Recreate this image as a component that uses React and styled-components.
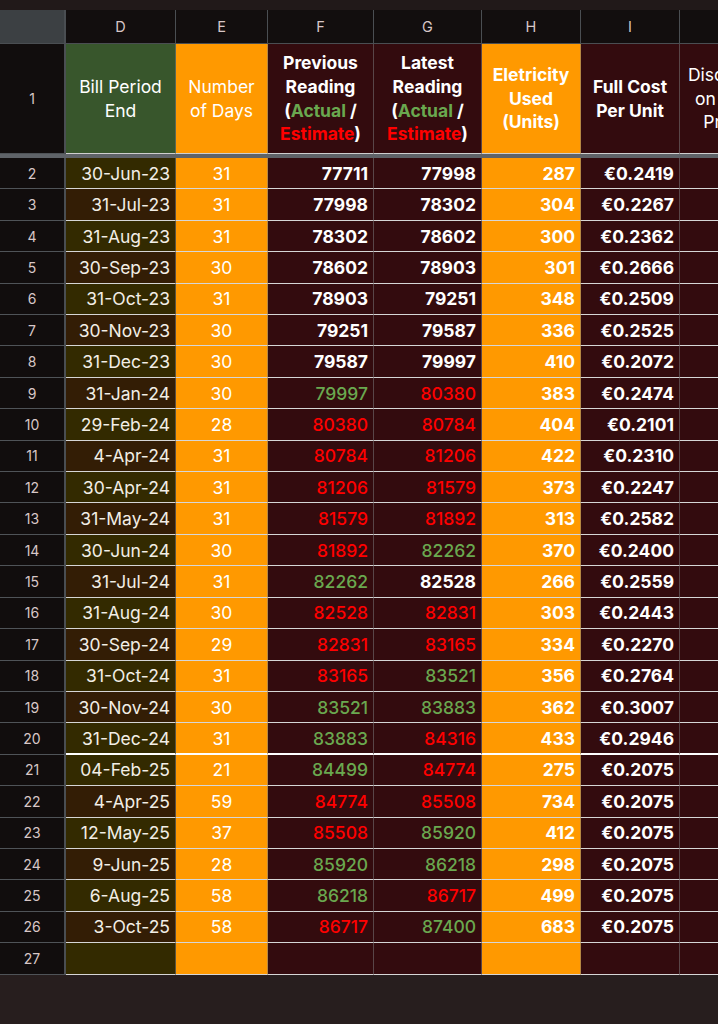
import React from "react";
import styled, { createGlobalStyle } from "styled-components";

const Global = createGlobalStyle`
  html, body { margin: 0; padding: 0; background: #271e1e; }
  body { font-family: Inter, Roboto, "Open Sans", Arial, sans-serif; }
  #root { width: 718px; height: 1024px; overflow: hidden; background: #271e1e; }
`;

const C = {
  olive: "#332a00",
  brown: "#331d05",
  maroon: "#330b0e",
  orange: "#ff9900",
  green: "#38562c",
  rownum: "#110d0d",
  red: "#ff0000",
  gtext: "#6aa84f",
};

const TopBand = styled.div`
  height: 10px;
  background: #211919;
`;

const Sheet = styled.div`
  display: grid;
  grid-template-columns: 66px 110px 92px 106px 108px 99px 99px 90px;
  grid-template-rows: 34px 110px 4px repeat(26, 31.42px);
  width: 770px;
`;

const Corner = styled.div`
  background: #3c4043;
  border-right: 2px solid #4a4e52;
  border-bottom: 1px solid #4a4e52;
  box-sizing: border-box;
`;

const ColLetter = styled.div`
  background: #120e0e;
  color: #d8c7c7;
  font-size: 14.5px;
  display: flex;
  align-items: center;
  justify-content: center;
  border-right: 1px solid #4a4e52;
  border-bottom: 1px solid #4a4e52;
  box-sizing: border-box;
`;

const RowNum = styled.div`
  background: ${C.rownum};
  color: #d8c7c7;
  font-size: 14px;
  display: flex;
  align-items: center;
  justify-content: center;
  border-right: 2px solid #4a4e52;
  border-bottom: 1px solid #4f5357;
  box-sizing: border-box;
`;

const HeadCell = styled.div`
  background: ${(p) => p.$bg};
  color: #ffffff;
  font-size: 17.5px;
  line-height: 23.6px;
  font-weight: ${(p) => (p.$bold ? 700 : 400)};
  text-align: center;
  display: flex;
  align-items: center;
  justify-content: center;
  padding: 0 2px;
  border-right: 1px solid rgba(120, 120, 120, 0.55);
  border-bottom: 1px solid #cfcfcf;
  box-sizing: border-box;
  white-space: nowrap;
`;

const Divider = styled.div`
  grid-column: 1 / -1;
  background: #5f6368;
`;

const Cell = styled.div`
  background: ${(p) => p.$bg};
  color: ${(p) => p.$color || "#ffffff"};
  font-size: 17.5px;
  font-weight: ${(p) => p.$weight || 400};
  display: flex;
  align-items: center;
  justify-content: ${(p) => (p.$center ? "center" : "flex-end")};
  padding: 0 5px;
  border-right: 1px solid rgba(120, 120, 120, 0.55);
  border-bottom: ${(p) => (p.$strong ? "2px solid #ffffff" : "1px solid #d6d6d6")};
  box-sizing: border-box;
  white-space: nowrap;
`;

const Act = styled.span`
  color: ${C.gtext};
`;
const Est = styled.span`
  color: ${C.red};
`;

const W = "w", G = "g", R = "r";
const rows = [
  ["30-Jun-23", 31, 77711, W, 77998, W, 287, "0.2419"],
  ["31-Jul-23", 31, 77998, W, 78302, W, 304, "0.2267"],
  ["31-Aug-23", 31, 78302, W, 78602, W, 300, "0.2362"],
  ["30-Sep-23", 30, 78602, W, 78903, W, 301, "0.2666"],
  ["31-Oct-23", 31, 78903, W, 79251, W, 348, "0.2509"],
  ["30-Nov-23", 30, 79251, W, 79587, W, 336, "0.2525"],
  ["31-Dec-23", 30, 79587, W, 79997, W, 410, "0.2072"],
  ["31-Jan-24", 30, 79997, G, 80380, R, 383, "0.2474"],
  ["29-Feb-24", 28, 80380, R, 80784, R, 404, "0.2101"],
  ["4-Apr-24", 31, 80784, R, 81206, R, 422, "0.2310"],
  ["30-Apr-24", 31, 81206, R, 81579, R, 373, "0.2247"],
  ["31-May-24", 31, 81579, R, 81892, R, 313, "0.2582"],
  ["30-Jun-24", 30, 81892, R, 82262, G, 370, "0.2400"],
  ["31-Jul-24", 31, 82262, G, 82528, W, 266, "0.2559"],
  ["31-Aug-24", 30, 82528, R, 82831, R, 303, "0.2443"],
  ["30-Sep-24", 29, 82831, R, 83165, R, 334, "0.2270"],
  ["31-Oct-24", 31, 83165, R, 83521, G, 356, "0.2764"],
  ["30-Nov-24", 30, 83521, G, 83883, G, 362, "0.3007"],
  ["31-Dec-24", 31, 83883, G, 84316, R, 433, "0.2946"],
  ["04-Feb-25", 21, 84499, G, 84774, R, 275, "0.2075"],
  ["4-Apr-25", 59, 84774, R, 85508, R, 734, "0.2075"],
  ["12-May-25", 37, 85508, R, 85920, G, 412, "0.2075"],
  ["9-Jun-25", 28, 85920, G, 86218, G, 298, "0.2075"],
  ["6-Aug-25", 58, 86218, G, 86717, R, 499, "0.2075"],
  ["3-Oct-25", 58, 86717, R, 87400, G, 683, "0.2075"],
  null,
];

const readingColor = (k) => (k === G ? C.gtext : k === R ? C.red : "#ffffff");

function Reading({ value, kind, strong }) {
  return (
    <Cell
      $bg={C.maroon}
      $color={readingColor(kind)}
      $weight={kind === W ? 700 : 500}
      $strong={strong}
    >
      {value}
    </Cell>
  );
}

export default function App() {
  return (
    <>
      <Global />
      <TopBand />
      <Sheet>
        <Corner />
        {["D", "E", "F", "G", "H", "I", ""].map((l, i) => (
          <ColLetter key={i}>{l}</ColLetter>
        ))}

        <RowNum>1</RowNum>
        <HeadCell $bg={C.green}>
          Bill Period
          <br />
          End
        </HeadCell>
        <HeadCell $bg={C.orange}>
          Number
          <br />
          of Days
        </HeadCell>
        <HeadCell $bg={C.maroon} $bold>
          <div>
            Previous
            <br />
            Reading
            <br />
            (<Act>Actual</Act> /
            <br />
            <Est>Estimate</Est>)
          </div>
        </HeadCell>
        <HeadCell $bg={C.maroon} $bold>
          <div>
            Latest
            <br />
            Reading
            <br />
            (<Act>Actual</Act> /
            <br />
            <Est>Estimate</Est>)
          </div>
        </HeadCell>
        <HeadCell $bg={C.orange} $bold>
          <div>
            Eletricity
            <br />
            Used
            <br />
            (Units)
          </div>
        </HeadCell>
        <HeadCell $bg={C.maroon} $bold>
          <div>
            Full Cost
            <br />
            Per Unit
          </div>
        </HeadCell>
        <HeadCell $bg={C.maroon}>
          <div>
            Discount
            <br />
            on Unit
            <br />
            Price
          </div>
        </HeadCell>

        <Divider />

        {rows.map((r, i) => {
          const n = i + 2;
          const olive = n <= 20 ? n % 2 === 0 : n % 2 === 1;
          const dBg = olive ? C.olive : C.brown;
          const strong = n === 20;
          return (
            <React.Fragment key={n}>
              <RowNum>{n}</RowNum>
              <Cell $bg={dBg} $strong={strong} $color="#f2eee6">{r ? r[0] : ""}</Cell>
              <Cell $bg={C.orange} $center $strong={strong}>{r ? r[1] : ""}</Cell>
              {r ? (
                <>
                  <Reading value={r[2]} kind={r[3]} strong={strong} />
                  <Reading value={r[4]} kind={r[5]} strong={strong} />
                </>
              ) : (
                <>
                  <Cell $bg={C.maroon} />
                  <Cell $bg={C.maroon} />
                </>
              )}
              <Cell $bg={C.orange} $weight={700} $strong={strong}>{r ? r[6] : ""}</Cell>
              <Cell $bg={C.maroon} $weight={700} $strong={strong}>{r ? `€${r[7]}` : ""}</Cell>
              <Cell $bg={C.maroon} $strong={strong} />
            </React.Fragment>
          );
        })}
      </Sheet>
    </>
  );
}
